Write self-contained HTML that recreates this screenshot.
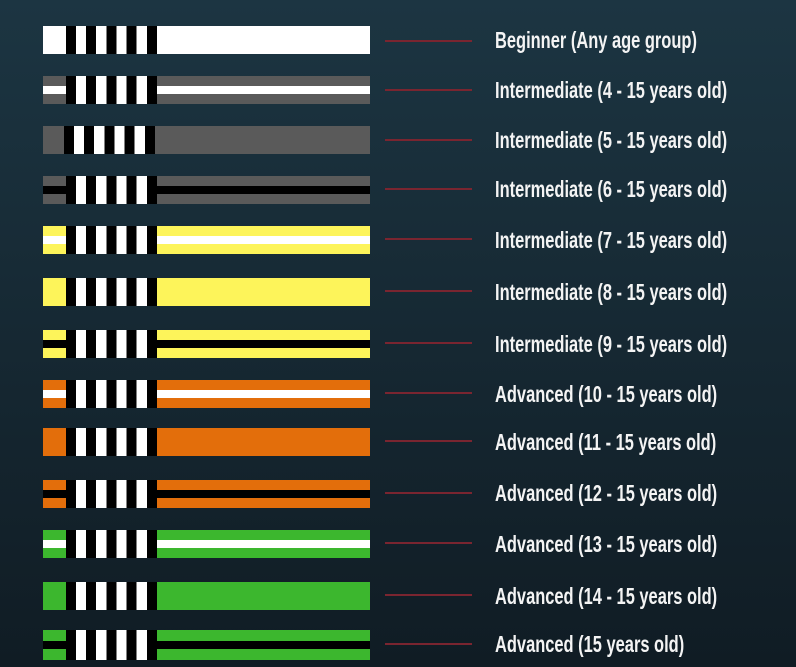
<!DOCTYPE html>
<html><head><meta charset="utf-8"><style>
body{margin:0;width:796px;height:667px;overflow:hidden;background:linear-gradient(#1c3542,#101c24);font-family:"Liberation Sans",sans-serif;position:relative}
.b{position:absolute;left:43px;width:327px;height:28px}
.s{position:absolute;left:0;right:0;top:10px;height:8px}
.k{position:absolute;left:23px;width:91px;top:0;height:100%;background:repeating-linear-gradient(90deg,#000 0 10px,#fff 10px 20.2px)}
.l{position:absolute;left:385px;width:87px;height:2px;background:#7a2530}
.t{position:absolute;left:495px;color:#f4f4f4;font-size:23px;font-weight:bold;line-height:26px;transform:scaleX(0.715);transform-origin:0 50%;white-space:nowrap}
</style></head><body>
<div class="b" style="top:26px;background:#fff"><div class="k"></div></div>
<div class="l" style="top:40px"></div><div class="t" style="top:27px">Beginner (Any age group)</div>

<div class="b" style="top:76px;background:#5a5a5a"><div class="s" style="background:#fff"></div><div class="k"></div></div>
<div class="l" style="top:89px"></div><div class="t" style="top:77px">Intermediate (4 - 15 years old)</div>

<div class="b" style="top:126px;background:#5a5a5a"><div class="k" style="left:21px"></div></div>
<div class="l" style="top:139px"></div><div class="t" style="top:127px">Intermediate (5 - 15 years old)</div>

<div class="b" style="top:176px;background:#5a5a5a"><div class="s" style="background:#000"></div><div class="k"></div></div>
<div class="l" style="top:188px"></div><div class="t" style="top:176px">Intermediate (6 - 15 years old)</div>

<div class="b" style="top:226px;background:#fdf45a"><div class="s" style="background:#fff"></div><div class="k"></div></div>
<div class="l" style="top:238px"></div><div class="t" style="top:227px">Intermediate (7 - 15 years old)</div>

<div class="b" style="top:278px;background:#fdf45a"><div class="k"></div></div>
<div class="l" style="top:290px"></div><div class="t" style="top:279px">Intermediate (8 - 15 years old)</div>

<div class="b" style="top:330px;background:#fdf45a"><div class="s" style="background:#000"></div><div class="k"></div></div>
<div class="l" style="top:342px"></div><div class="t" style="top:331px">Intermediate (9 - 15 years old)</div>

<div class="b" style="top:380px;background:#e36e0b"><div class="s" style="background:#fff"></div><div class="k"></div></div>
<div class="l" style="top:392px"></div><div class="t" style="top:381px">Advanced (10 - 15 years old)</div>

<div class="b" style="top:428px;background:#e36e0b"><div class="k"></div></div>
<div class="l" style="top:440px"></div><div class="t" style="top:429px">Advanced (11 - 15 years old)</div>

<div class="b" style="top:480px;background:#e36e0b"><div class="s" style="background:#000"></div><div class="k"></div></div>
<div class="l" style="top:492px"></div><div class="t" style="top:480px">Advanced (12 - 15 years old)</div>

<div class="b" style="top:530px;background:#3cb72e"><div class="s" style="background:#fff"></div><div class="k"></div></div>
<div class="l" style="top:542px"></div><div class="t" style="top:531px">Advanced (13 - 15 years old)</div>

<div class="b" style="top:582px;background:#3cb72e"><div class="k"></div></div>
<div class="l" style="top:594px"></div><div class="t" style="top:583px">Advanced (14 - 15 years old)</div>

<div class="b" style="top:630px;background:#3cb72e;height:30px"><div class="s" style="background:#000;top:11px"></div><div class="k"></div></div>
<div class="l" style="top:643px"></div><div class="t" style="top:631px">Advanced (15 years old)</div>
</body></html>
